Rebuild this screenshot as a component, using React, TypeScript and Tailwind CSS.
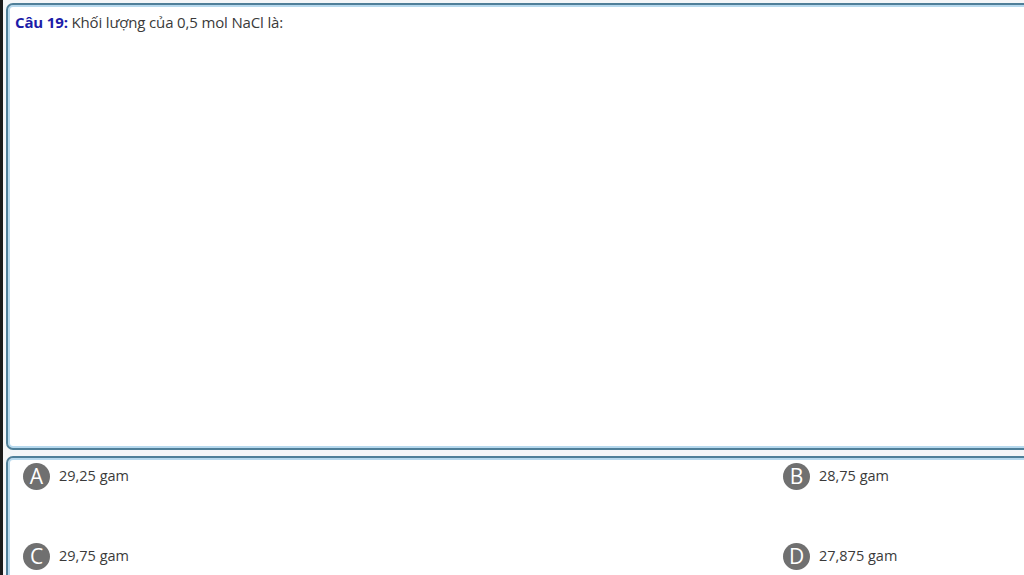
const options = [
  { letter: 'A', text: '29,25 gam' },
  { letter: 'B', text: '28,75 gam' },
  { letter: 'C', text: '29,75 gam' },
  { letter: 'D', text: '27,875 gam' },
]

function Option({ letter, text }: { letter: string; text: string }) {
  return (
    <div className="flex items-center h-[26px]">
      <div className="w-[27px] h-[27px] rounded-full bg-[#707070] flex items-center justify-center text-white text-[21px] leading-none">
        {letter}
      </div>
      <span className="ml-[9px] text-[14.5px] text-[#3a3a3a]">{text}</span>
    </div>
  )
}

export default function App() {
  return (
    <div className="w-[1024px] h-[575px] overflow-hidden bg-[#f4f6f8] flex font-['Open_Sans','Noto_Sans',sans-serif]">
      {/* dark edge on the left */}
      <div className="w-[3px] shrink-0 bg-[#1a1a1a]" />
      <div className="flex-1 flex flex-col pl-[3px] pt-[3px] min-w-0">
        <div className="h-[447px] w-[1040px] shrink-0 rounded-[7px] border-2 border-[#4f7f99] bg-white shadow-[inset_0_0_0_2px_#b7d9ee] px-[7px] pt-[7px]">
          <p className="text-[15px] leading-[20px] text-[#3a3a3a] tracking-[-0.15px]">
            <span className="font-bold text-[#1c1ca8]">Câu 19:</span> Khối lượng của 0,5 mol NaCl là:
          </p>
        </div>
        <div className="mt-[6px] h-[140px] w-[1040px] shrink-0 rounded-[7px] border-2 border-[#4f7f99] bg-white shadow-[inset_0_0_0_2px_#b7d9ee] pl-[15px] pt-[5px]">
          <div className="grid grid-cols-[760px_1fr] gap-y-[54px]">
            {options.map((o) => (
              <Option key={o.letter} letter={o.letter} text={o.text} />
            ))}
          </div>
        </div>
      </div>
    </div>
  )
}
